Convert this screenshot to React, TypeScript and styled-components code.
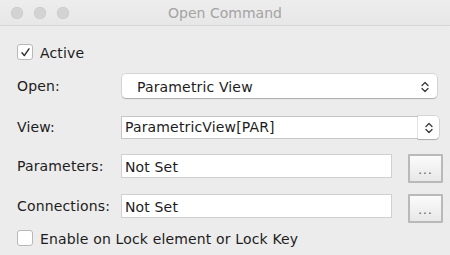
import { FC, ReactNode } from "react";
import styled, { createGlobalStyle } from "styled-components";

const Global = createGlobalStyle`
  html, body {
    margin: 0;
    padding: 0;
    background: #ececec;
  }
  body {
    font-family: "DejaVu Sans", "Liberation Sans", sans-serif;
    font-size: 14px;
    letter-spacing: 0.15px;
    color: #1c1c1c;
  }
`;

const Window = styled.div`
  width: 450px;
  height: 255px;
  background: #ececec;
  box-sizing: border-box;
  display: flex;
  flex-direction: column;
  overflow: hidden;
`;

const TitleBar = styled.div`
  position: relative;
  height: 25px;
  flex: none;
  background: linear-gradient(#ededed, #e7e7e7);
  border-bottom: 1px solid #d6d6d6;
  display: flex;
  align-items: center;
  justify-content: center;
`;

const Lights = styled.div`
  position: absolute;
  left: 11px;
  top: 7px;
  display: flex;
  gap: 11px;
`;

const Light = styled.span`
  width: 12px;
  height: 12px;
  border-radius: 50%;
  background: #d3d3d3;
  box-shadow: inset 0 0 0 0.5px #c6c6c6;
`;

const Title = styled.div`
  color: #a3a3a3;
  font-size: 14px;
  letter-spacing: 0;
  margin-top: 1px;
`;

const Body = styled.div`
  padding: 0 7px 0 17px;
  display: flex;
  flex-direction: column;
`;

const Row = styled.div<{ $top: number; $h: number }>`
  margin-top: ${(p) => p.$top}px;
  height: ${(p) => p.$h}px;
  display: flex;
  align-items: flex-start;
`;

const Label = styled.div<{ $h: number }>`
  width: 104px;
  flex: none;
  height: ${(p) => p.$h}px;
  line-height: ${(p) => p.$h}px;
  white-space: nowrap;
`;

const Check = styled.span`
  width: 16px;
  height: 16px;
  box-sizing: border-box;
  flex: none;
  background: #fff;
  border: 1px solid #b8b8b8;
  border-radius: 3px;
  display: flex;
  align-items: center;
  justify-content: center;
  margin-right: 7px;
`;

const CheckText = styled.span`
  line-height: 16px;
  padding-top: 1px;
  white-space: nowrap;
`;

const Popup = styled.div`
  width: 315px;
  height: 24px;
  box-sizing: border-box;
  background: #fff;
  border-radius: 4px;
  box-shadow: 0 0 0 0.5px rgba(0, 0, 0, 0.18), 0 1px 1px rgba(0, 0, 0, 0.2);
  display: flex;
  align-items: center;
  padding: 1px 8px 0 15px;
  margin-left: 1px;
`;

const Grow = styled.span`
  flex: 1;
  white-space: nowrap;
`;

const Combo = styled.div`
  width: 318px;
  height: 23px;
  display: flex;
`;

const ComboField = styled.div`
  flex: 1;
  box-sizing: border-box;
  background: #fff;
  border: 1px solid #c6c6c6;
  border-right: none;
  line-height: 21px;
  padding-left: 3px;
  white-space: nowrap;
`;

const ComboButton = styled.div`
  width: 21px;
  height: 23px;
  box-sizing: border-box;
  background: #fff;
  border-radius: 0 4px 4px 0;
  box-shadow: 0 0 0 0.5px rgba(0, 0, 0, 0.18), 0 1px 1px rgba(0, 0, 0, 0.2);
  display: flex;
  align-items: center;
  justify-content: center;
`;

const Field = styled.div`
  flex: 1;
  height: 24px;
  box-sizing: border-box;
  background: #fff;
  border: 1px solid #d0d0d0;
  line-height: 22px;
  padding: 1px 0 0 3px;
  white-space: nowrap;
`;

const DotsButton = styled.button`
  width: 35px;
  height: 29px;
  margin-left: 16px;
  box-sizing: border-box;
  border: 2px solid #b9b9b9;
  border-radius: 1px;
  background: linear-gradient(#fbfbfb, #e8e8e8);
  font-family: inherit;
  font-size: 12px;
  color: #5a5a5a;
  padding: 2px 0 0 0;
  letter-spacing: 1px;
  display: flex;
  align-items: center;
  justify-content: center;
`;

const Stepper: FC = () => (
  <svg width="8" height="12" viewBox="0 0 8 12">
    <path
      d="M1 4.5 L4 1.5 L7 4.5 M1 7.5 L4 10.5 L7 7.5"
      fill="none"
      stroke="#3a3a3a"
      strokeWidth="1.3"
      strokeLinecap="round"
      strokeLinejoin="round"
    />
  </svg>
);

const Tick: FC = () => (
  <svg width="11" height="11" viewBox="0 0 11 11">
    <path
      d="M2 5.8 L4.3 8.6 L9 1.8"
      fill="none"
      stroke="#2a2a2a"
      strokeWidth="1.4"
      strokeLinecap="round"
      strokeLinejoin="round"
    />
  </svg>
);

const CheckRow: FC<{ top: number; checked?: boolean; children: ReactNode }> = ({
  top,
  checked,
  children,
}) => (
  <Row $top={top} $h={16}>
    <Check>{checked && <Tick />}</Check>
    <CheckText>{children}</CheckText>
  </Row>
);

const App: FC = () => {
  return (
    <>
      <Global />
      <Window>
        <TitleBar>
          <Lights>
            <Light />
            <Light />
            <Light />
          </Lights>
          <Title>Open Command</Title>
        </TitleBar>
        <Body>
          <CheckRow top={18} checked>
            Active
          </CheckRow>

          <Row $top={14} $h={24}>
            <Label $h={25}>Open:</Label>
            <Popup>
              <Grow>Parametric View</Grow>
              <Stepper />
            </Popup>
          </Row>

          <Row $top={18} $h={23}>
            <Label $h={23}>View:</Label>
            <Combo>
              <ComboField>ParametricView[PAR]</ComboField>
              <ComboButton>
                <Stepper />
              </ComboButton>
            </Combo>
          </Row>

          <Row $top={15} $h={29}>
            <Label $h={25}>Parameters:</Label>
            <Field>Not Set</Field>
            <DotsButton>...</DotsButton>
          </Row>

          <Row $top={11} $h={29}>
            <Label $h={25}>Connections:</Label>
            <Field>Not Set</Field>
            <DotsButton>...</DotsButton>
          </Row>

          <CheckRow top={7}>Enable on Lock element or Lock Key</CheckRow>
        </Body>
      </Window>
    </>
  );
};

export default App;
